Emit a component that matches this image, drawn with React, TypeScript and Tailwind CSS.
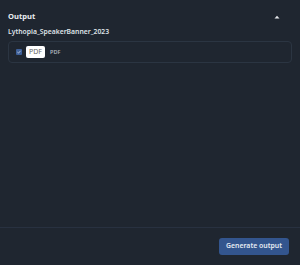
export default function App() {
  return (
    <div
      className="w-[300px] h-[265px] bg-[#1f2630] flex flex-col text-white"
      style={{ fontFamily: '"Noto Sans", "Open Sans", sans-serif' }}
    >
      <div className="flex-1 px-2 pt-[11px]">
        <div className="flex items-center justify-between h-[11px]">
          <h2 className="text-[7.6px] font-bold leading-[11px] text-[#e8ebef]">Output</h2>
          <svg width="6" height="4" viewBox="0 0 6 4" className="mr-[12px]">
            <path d="M0.5 3.5 L3 0.8 L5.5 3.5 Z" fill="#e5e7eb" />
          </svg>
        </div>
        <div className="mt-[5px] text-[6.8px] font-semibold leading-[10px] text-[#dfe3e8]">
          Lythopia_SpeakerBanner_2023
        </div>
        <div className="mt-[4px] h-[22px] rounded border border-[#2b3542] flex items-center pl-[7px] gap-[4px]">
          <span className="w-[6px] h-[6px] rounded-[1px] bg-[#3d5f98] flex items-center justify-center">
            <svg width="6" height="6" viewBox="0 0 6 6">
              <path d="M1.4 3.1 L2.5 4.1 L4.6 1.8" stroke="#cfd8e6" strokeWidth="0.8" fill="none" />
            </svg>
          </span>
          <span className="h-[12px] w-[19px] bg-white rounded-[2px] text-[7px] leading-[12px] text-[#666] flex items-center justify-center">
            PDF
          </span>
          <span className="ml-[1px] text-[5.5px] font-semibold text-[#aeb5bf]">PDF</span>
        </div>
      </div>
      <div className="h-[38px] border-t border-[#283140] flex items-center justify-end pr-[11px]">
        <button className="h-[17px] w-[70px] rounded-[3px] bg-[#33558e] text-[6.9px] font-semibold text-[#e6ebf2] leading-none">
          Generate output
        </button>
      </div>
    </div>
  );
}
